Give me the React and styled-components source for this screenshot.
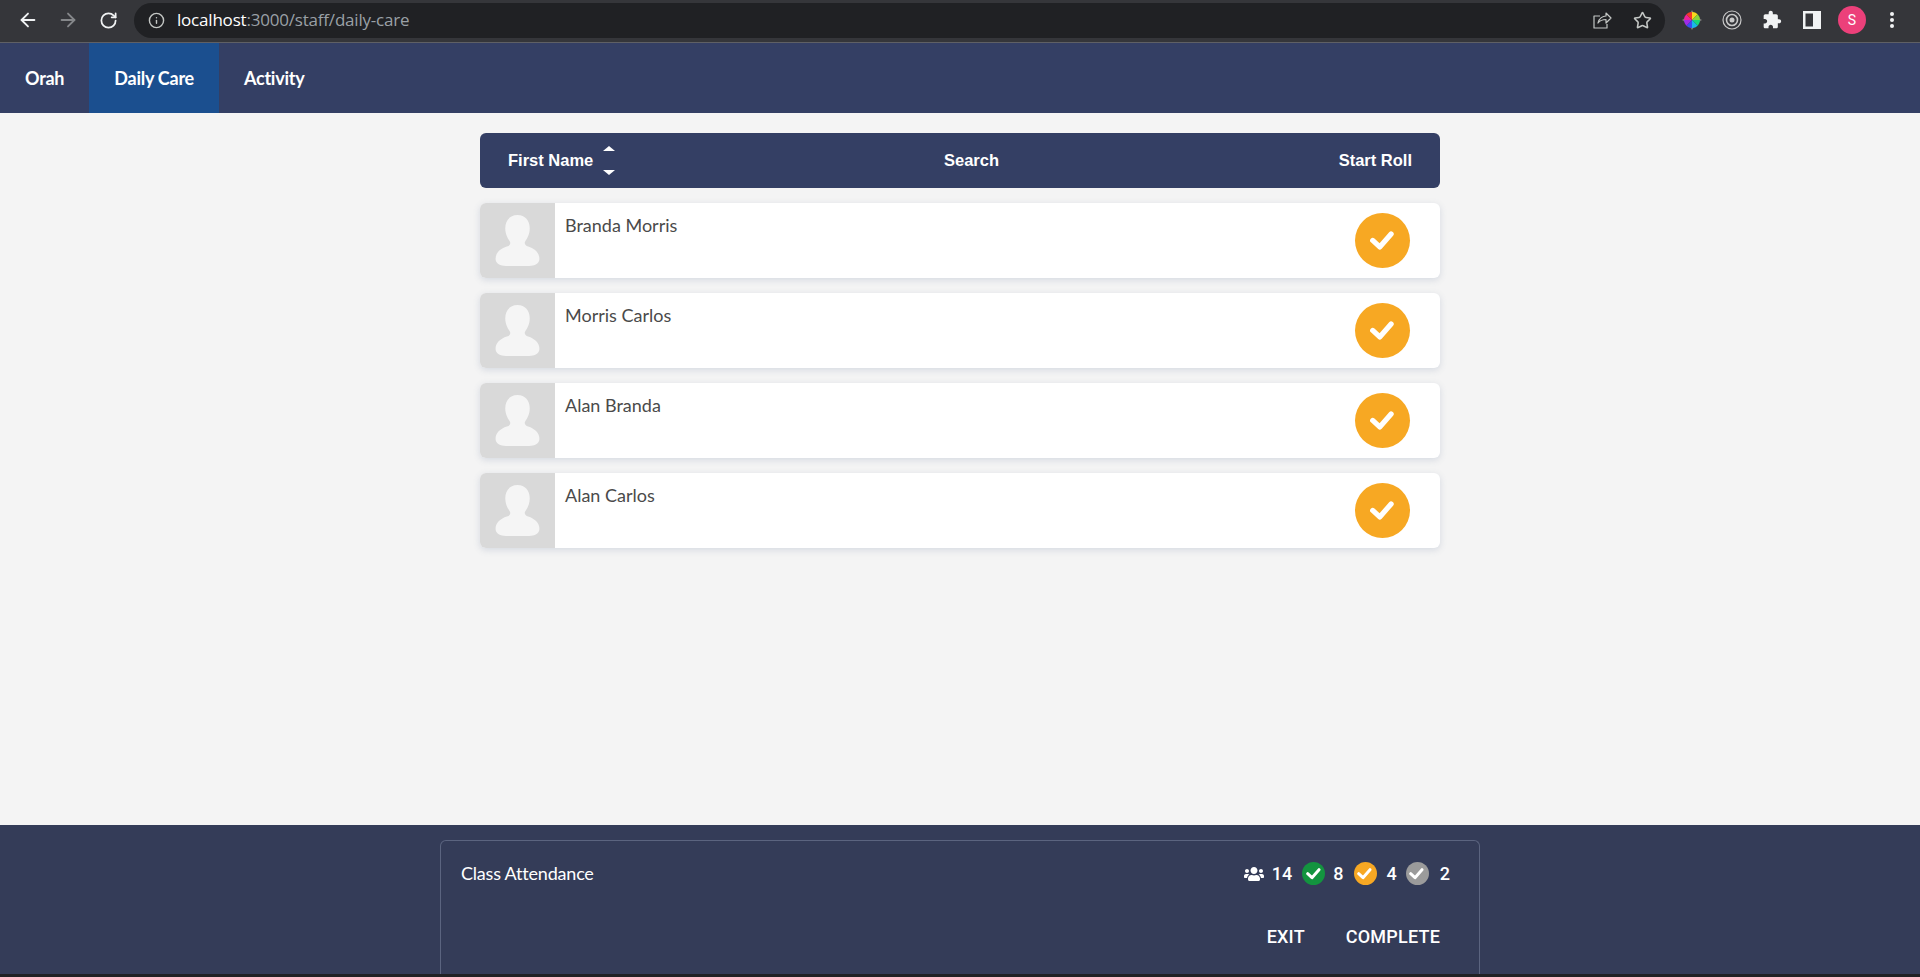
import React from "react";
import styled, { createGlobalStyle } from "styled-components";
import { FaUsers } from "react-icons/fa";
import { ArrowLeft, ArrowRight, RotateCw, Info, Star } from "lucide-react";

const GlobalStyle = createGlobalStyle`
  html, body { margin: 0; padding: 0; height: 100%; overflow: hidden; background: #f4f4f4; }
  #root { height: 100%; }
`;

const Page = styled.div`
  display: flex;
  flex-direction: column;
  height: 977px;
  background: #f4f4f4;
  font-family: "Lato", "Liberation Sans", sans-serif;
`;

const BrowserBar = styled.div`
  flex: 0 0 43px;
  box-sizing: border-box;
  display: flex;
  align-items: center;
  padding: 0 8px 2px 15px;
  background: #35363a;
  border-bottom: 1px solid #5f6065;
`;

const NavIcon = styled.span`
  width: 26px;
  height: 26px;
  margin-right: ${(p) => p.$gap ?? 14}px;
  display: flex;
  align-items: center;
  justify-content: center;
  color: ${(p) => p.$color || "#f1f3f4"};
`;

const UrlPill = styled.div`
  flex: 1;
  height: 35px;
  margin-left: 13px;
  padding: 0 13px 0 14px;
  box-sizing: border-box;
  display: flex;
  align-items: center;
  border-radius: 18px;
  background: #202124;
  color: #c4c7c5;
`;

const UrlText = styled.span`
  margin-left: 12px;
  padding-bottom: 2px;
  flex: 1;
  font: 17px "Open Sans", "Noto Sans", sans-serif;
  letter-spacing: -0.2px;
  color: #9aa0a6;
  b { font-weight: 400; color: #fff; }
`;

const ShareSlot = styled.span`
  display: flex;
  margin-right: 21px;
`;

const ExtRow = styled.div`
  display: flex;
  align-items: center;
  margin-left: 7px;
`;

const Ext = styled.span`
  width: 40px;
  display: flex;
  justify-content: center;
  align-items: center;
  color: #f1f3f4;
`;

const Avatar = styled.span`
  width: 28px;
  height: 28px;
  border-radius: 50%;
  background: #ec407a;
  color: #fff;
  font: 14px "Roboto", sans-serif;
  display: flex;
  align-items: center;
  justify-content: center;
`;

const TopNav = styled.nav`
  flex: 0 0 70px;
  display: flex;
  background: #343f64;
`;

const NavLink = styled.a`
  display: flex;
  align-items: center;
  padding: 0 25px;
  color: #fff;
  font-size: 18px;
  font-weight: 700;
  letter-spacing: -0.25px;
  background: ${(p) => (p.$active ? "#1b4f8f" : "transparent")};
`;

const Main = styled.main`
  flex: 1;
  width: 960px;
  margin: 0 auto;
  padding-top: 20px;
`;

const ListHeader = styled.div`
  height: 55px;
  display: grid;
  grid-template-columns: 1fr 1fr 1fr;
  align-items: center;
  padding: 0 28px;
  margin-bottom: 15px;
  border-radius: 6px;
  background: #343f64;
  color: #fff;
  font: 700 16.5px "Liberation Sans", sans-serif;
`;

const HeaderCell = styled.div`
  display: flex;
  align-items: center;
  justify-content: ${(p) => p.$justify || "flex-start"};
  padding-left: ${(p) => p.$indent || 0}px;
`;

const SortArrows = styled.span`
  display: flex;
  flex-direction: column;
  gap: 19px;
  margin-left: 10px;
`;

const Arrow = styled.span`
  width: 0;
  height: 0;
  border-left: 6px solid transparent;
  border-right: 6px solid transparent;
  border-${(p) => (p.$up ? "bottom" : "top")}: 5px solid #fff;
`;

const Row = styled.div`
  height: 75px;
  display: flex;
  margin-bottom: 15px;
  border-radius: 6px;
  overflow: hidden;
  background: #fff;
  box-shadow: 0 2px 7px rgba(90, 110, 150, 0.2);
`;

const Photo = styled.div`
  flex: 0 0 75px;
  display: flex;
  align-items: center;
  justify-content: center;
  background: #d9d9d9;
`;

const Name = styled.div`
  flex: 1;
  padding: 11px 0 0 10px;
  font-size: 18px;
  line-height: 22px;
  color: #4a4a4a;
`;

const RollCell = styled.div`
  display: flex;
  align-items: center;
  padding-right: 30px;
`;

const RoundCheck = styled.span`
  width: ${(p) => p.$size}px;
  height: ${(p) => p.$size}px;
  border-radius: 50%;
  background: ${(p) => p.$color};
  display: flex;
  align-items: center;
  justify-content: center;
`;

const Footer = styled.footer`
  flex: 0 0 149px;
  padding-top: 15px;
  box-sizing: border-box;
  background: #343c58;
`;

const Bottom = styled.div`
  flex: 0 0 3px;
  background: #202124;
`;

const Panel = styled.div`
  width: 1040px;
  height: 134px;
  margin: 0 auto;
  padding: 0 39px 0 20px;
  box-sizing: border-box;
  border: 1px solid #5b647f;
  border-bottom: 0;
  border-radius: 6px 6px 0 0;
  color: #fff;
`;

const PanelTop = styled.div`
  height: 65px;
  display: flex;
  align-items: center;
  justify-content: space-between;
`;

const PanelTitle = styled.span`
  padding-bottom: 2px;
  font-size: 18px;
  letter-spacing: -0.2px;
`;

const Stats = styled.div`
  display: flex;
  align-items: center;
  margin-right: -10px;
  font: 500 18px "Roboto", sans-serif;
`;

const StatNum = styled.span`
  margin: 0 ${(p) => p.$after ?? 10}px 0 ${(p) => p.$before ?? 10}px;
`;

const Actions = styled.div`
  display: flex;
  justify-content: flex-end;
  gap: 41px;
  margin-top: 20px;
  font: 500 18px "Roboto", sans-serif;
  letter-spacing: 0.2px;
`;

const Action = styled.span`
  text-transform: uppercase;
`;

const Check = ({ size, weight }) => (
  <svg width={size} height={size} viewBox="0 0 24 24" fill="none" stroke="#fff" strokeWidth={weight} strokeLinecap="round" strokeLinejoin="round">
    <polyline points="2.500,11.500 9,17.500 19.500,5.500" />
  </svg>
);

const PersonIcon = () => (
  <svg width="45" height="51" viewBox="0 0 43 50" fill="#f5f5f5">
    <path d="M21.500 0C29 0 33.500 5.500 33.500 13C33.500 19 31 23 29 26C28 28 29 30 32 31C38 33 43 37 43 43C43 48 38 50 33 50H10C5 50 0 48 0 43C0 37 5 33 11 31C14 30 15 28 14 26C12 23 9.500 19 9.500 13C9.500 5.500 14 0 21.500 0z" />
  </svg>
);

const ShareIcon = () => (
  <svg width="20" height="20" viewBox="0 0 20 20" fill="none" stroke="#c4c7c5" strokeWidth="1.200" strokeLinejoin="round">
    <path d="M8 6H2v12h13v-4" />
    <path d="M6 13c1-5 5-7 8-7V3l5 5-5 5V9.500c-3 0-6 1-8 3.500z" />
  </svg>
);

const ColorWheel = () => (
  <svg width="20" height="20" viewBox="0 0 20 20">
    <path d="M10 0l2 3h-4zM10 20l2-3h-4zM0 10l3-2v4zM20 10l-3-2v4z" fill="#777" />
    <path d="M10 10V2a8 8 0 0 1 5.700 2.300z" fill="#f9d71c" />
    <path d="M10 10l5.700-5.700A8 8 0 0 1 18 10z" fill="#8bd43a" />
    <path d="M10 10h8a8 8 0 0 1-2.300 5.700z" fill="#18d67a" />
    <path d="M10 10l5.700 5.700A8 8 0 0 1 10 18z" fill="#19b7e8" />
    <path d="M10 10v8a8 8 0 0 1-5.700-2.300z" fill="#3a4df0" />
    <path d="M10 10l-5.700 5.700A8 8 0 0 1 2 10z" fill="#a02be8" />
    <path d="M10 10H2a8 8 0 0 1 2.300-5.700z" fill="#f0229a" />
    <path d="M10 10L4.300 4.300A8 8 0 0 1 10 2z" fill="#f23a2a" />
  </svg>
);

const TargetIcon = () => (
  <svg width="20" height="20" viewBox="0 0 20 20" fill="none" stroke="#c8c8c8">
    <circle cx="10" cy="10" r="9" strokeWidth="1.200" />
    <circle cx="10" cy="10" r="5.500" strokeWidth="1.600" />
    <circle cx="10" cy="10" r="2.500" fill="#c8c8c8" strokeWidth="0" />
  </svg>
);

const PuzzleIcon = () => (
  <svg width="20" height="20" viewBox="0 0 24 24" fill="#f1f3f4">
    <path d="M20.500 11H19V7c0-1.100-.9-2-2-2h-4V3.500C13 2.120 11.880 1 10.500 1S8 2.120 8 3.500V5H4c-1.100 0-1.990.9-1.990 2v3.800H3.500c1.490 0 2.700 1.210 2.700 2.700s-1.210 2.700-2.700 2.700H2V20c0 1.100.9 2 2 2h3.800v-1.500c0-1.490 1.210-2.700 2.700-2.700 1.490 0 2.700 1.210 2.700 2.700V22H17c1.100 0 2-.9 2-2v-4h1.500c1.380 0 2.500-1.120 2.500-2.500S21.880 11 20.500 11z" />
  </svg>
);

const SidePanelIcon = () => (
  <svg width="18" height="18" viewBox="0 0 18 18">
    <path d="M0 0h18v18H0zM2.500 2.500v13H10v-13z" fill="#f1f3f4" fillRule="evenodd" />
  </svg>
);

const MenuDots = () => (
  <svg width="6" height="18" viewBox="0 0 6 18" fill="#f1f3f4">
    <circle cx="3" cy="3" r="2" />
    <circle cx="3" cy="9" r="2" />
    <circle cx="3" cy="15" r="2" />
  </svg>
);

const students = ["Branda Morris", "Morris Carlos", "Alan Branda", "Alan Carlos"];

export default function App() {
  return (
    <Page>
      <GlobalStyle />
      <BrowserBar>
        <NavIcon><ArrowLeft size={22} strokeWidth={2} /></NavIcon>
        <NavIcon $color="#85878a"><ArrowRight size={22} strokeWidth={2} /></NavIcon>
        <NavIcon $gap={0}><RotateCw size={19} strokeWidth={2.2} /></NavIcon>
        <UrlPill>
          <Info size={17} strokeWidth={2} />
          <UrlText><b>localhost</b>:3000/staff/daily-care</UrlText>
          <ShareSlot><ShareIcon /></ShareSlot>
          <Star size={19} strokeWidth={2} />
        </UrlPill>
        <ExtRow>
          <Ext><ColorWheel /></Ext>
          <Ext><TargetIcon /></Ext>
          <Ext><PuzzleIcon /></Ext>
          <Ext><SidePanelIcon /></Ext>
          <Ext><Avatar>S</Avatar></Ext>
          <Ext><MenuDots /></Ext>
        </ExtRow>
      </BrowserBar>

      <TopNav>
        <NavLink>Orah</NavLink>
        <NavLink $active>Daily Care</NavLink>
        <NavLink>Activity</NavLink>
      </TopNav>

      <Main>
        <ListHeader>
          <HeaderCell>
            First Name
            <SortArrows>
              <Arrow $up />
              <Arrow />
            </SortArrows>
          </HeaderCell>
          <HeaderCell $justify="center" $indent={23}>Search</HeaderCell>
          <HeaderCell $justify="flex-end">Start Roll</HeaderCell>
        </ListHeader>
        {students.map((name) => (
          <Row key={name}>
            <Photo><PersonIcon /></Photo>
            <Name>{name}</Name>
            <RollCell>
              <RoundCheck $size={55} $color="#f7a823"><Check size={26} weight={4.8} /></RoundCheck>
            </RollCell>
          </Row>
        ))}
      </Main>

      <Footer>
        <Panel>
          <PanelTop>
            <PanelTitle>Class Attendance</PanelTitle>
            <Stats>
              <FaUsers size={20} />
              <StatNum $before={8}>14</StatNum>
              <RoundCheck $size={23} $color="#13943f"><Check size={16} weight={4.4} /></RoundCheck>
              <StatNum $before={8}>8</StatNum>
              <RoundCheck $size={23} $color="#f7a823"><Check size={16} weight={4.4} /></RoundCheck>
              <StatNum $after={9}>4</StatNum>
              <RoundCheck $size={23} $color="#9b9b9b"><Check size={16} weight={4.4} /></RoundCheck>
              <StatNum $after={0} $before={11}>2</StatNum>
            </Stats>
          </PanelTop>
          <Actions>
            <Action>Exit</Action>
            <Action>Complete</Action>
          </Actions>
        </Panel>
      </Footer>
      <Bottom />
    </Page>
  );
}
